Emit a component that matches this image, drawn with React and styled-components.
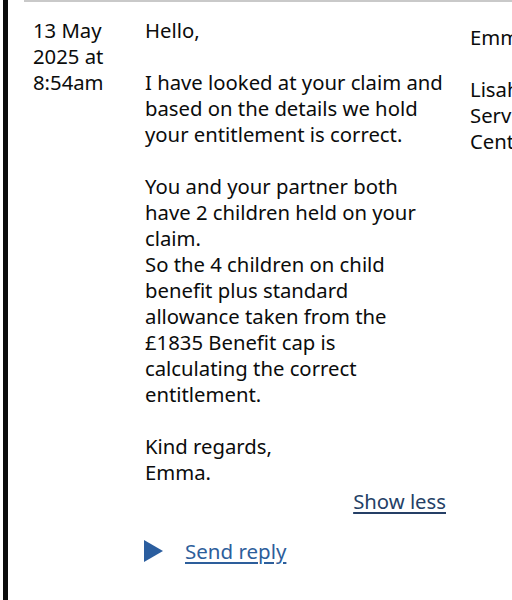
import React from 'react'
import styled, { createGlobalStyle } from 'styled-components'

const GlobalStyle = createGlobalStyle`
  html, body {
    margin: 0;
    padding: 0;
    background: #ffffff;
    overflow: hidden;
  }
  body {
    font-family: "Noto Sans", "Liberation Sans", Arial, sans-serif;
    color: #0b0c0c;
  }
`

const Page = styled.div`
  padding-left: 3px;
  min-height: 600px;
  display: flex;
`

const Thread = styled.div`
  flex: 1;
  border-left: 5px solid #0b0c0c;
  padding-left: 16px;
  min-height: 600px;
`

const MessageRow = styled.div`
  display: grid;
  grid-template-columns: 121px 325px 110px;
  border-top: 2px solid #c9c9c9;
  padding-top: 15px;
  width: 556px;
`

const Cell = styled.div`
  font-size: 20.3px;
  line-height: 26px;
  padding-right: ${p => p.$right || 0}px;
  padding-top: ${p => p.$top || 0}px;
`

const DateCell = styled(Cell)`
  padding-left: 9px;
  padding-right: 20px;
`

const Para = styled.p`
  margin: 0 0 26px;

  &:last-of-type {
    margin-bottom: 0;
  }
`

const ToggleRow = styled.div`
  display: flex;
  justify-content: flex-end;
  margin-top: 3px;
`

const ToggleLink = styled.a`
  color: #253f66;
  font-size: 20.3px;
  line-height: 26px;
  text-decoration: underline;
  text-decoration-thickness: 2px;
  text-underline-offset: 3px;
  cursor: pointer;
`

const Reply = styled.div`
  display: flex;
  align-items: center;
  gap: 22px;
  margin-top: 24px;
`

const Arrow = styled.span`
  width: 0;
  height: 0;
  border-style: solid;
  border-width: 11px 0 11px 19px;
  border-color: transparent transparent transparent #2b5e9f;
  margin-left: -1px;
`

const ReplyLink = styled.a`
  color: #2d5e9b;
  font-size: 20.5px;
  line-height: 26px;
  text-decoration: underline;
  text-decoration-thickness: 2px;
  text-underline-offset: 3px;
  cursor: pointer;
`

export default function App() {
  return (
    <>
      <GlobalStyle />
      <Page>
        <Thread>
          <MessageRow>
            <DateCell>13 May 2025 at 8:54am</DateCell>
            <Cell $right={24}>
              <Para>Hello,</Para>
              <Para>
                I have looked at your claim and based on the details we hold
                your entitlement is correct.
              </Para>
              <Para>
                You and your partner both have 2 children held on your claim.
                <br />
                So the 4 children on child benefit plus standard allowance
                taken from the £1835 Benefit cap is
                <br />
                calculating the correct entitlement.
              </Para>
              <Para>
                Kind regards,
                <br />
                Emma.
              </Para>
              <ToggleRow>
                <ToggleLink>Show less</ToggleLink>
              </ToggleRow>
              <Reply>
                <Arrow />
                <ReplyLink>Send reply</ReplyLink>
              </Reply>
            </Cell>
            <Cell $top={7}>
              <Para>Emma</Para>
              <Para>Lisahally Service Centre</Para>
            </Cell>
          </MessageRow>
        </Thread>
      </Page>
    </>
  )
}
